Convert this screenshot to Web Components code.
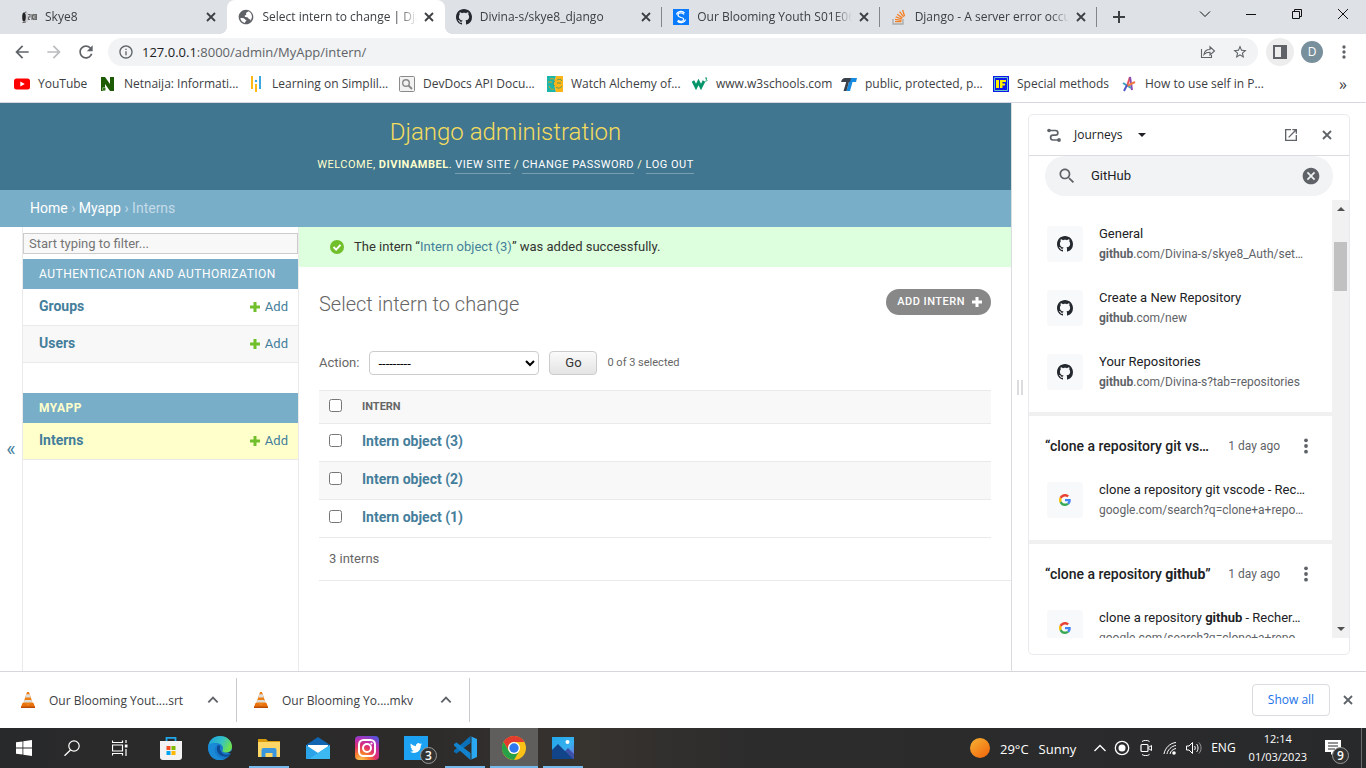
<!DOCTYPE html>
<html lang="en">
<head>
<meta charset="utf-8">
<title>Select intern to change | Django site admin</title>
<style>
  html, body { margin: 0; height: 100%; }
  body { display: flex; flex-direction: column; background: #fff; overflow: hidden;
    font: 12px/16px "Open Sans", "Noto Sans", sans-serif; color: #3c4043; }
  .workspace { flex: 1; min-height: 0; display: flex; }
</style>
</head>
<body>
<tab-strip>
  <browser-tab icon="skye">Skye8</browser-tab>
  <browser-tab icon="globe" active>Select intern to change | Djan</browser-tab>
  <browser-tab icon="github" divider>Divina-s/skye8_django</browser-tab>
  <browser-tab icon="shazam" divider>Our Blooming Youth S01E06</browser-tab>
  <browser-tab icon="stack" divider>Django - A server error occurr</browser-tab>
</tab-strip>
<nav-toolbar></nav-toolbar>
<bookmark-bar>
  <bookmark-link icon="youtube">YouTube</bookmark-link>
  <bookmark-link icon="netnaija">Netnaija: Informati...</bookmark-link>
  <bookmark-link icon="simplilearn">Learning on Simplil...</bookmark-link>
  <bookmark-link icon="devdocs">DevDocs API Docu...</bookmark-link>
  <bookmark-link icon="alchemy">Watch Alchemy of...</bookmark-link>
  <bookmark-link icon="w3">www.w3schools.com</bookmark-link>
  <bookmark-link icon="tee">public, protected, p...</bookmark-link>
  <bookmark-link icon="iff">Special methods</bookmark-link>
  <bookmark-link icon="star-a">How to use self in P...</bookmark-link>
</bookmark-bar>
<div class="workspace">
  <admin-page></admin-page>
  <side-panel>
    <journey-group>
      <journey-item icon="github" name="General"><b>github</b>.com/Divina-s/skye8_Auth/set…</journey-item>
      <journey-item icon="github" name="Create a New Repository"><b>github</b>.com/new</journey-item>
      <journey-item icon="github" name="Your Repositories"><b>github</b>.com/Divina-s?tab=repositories</journey-item>
    </journey-group>
    <journey-group age="1 day ago">
      <span slot="query">“clone a repository git vs…</span>
      <journey-item icon="google"><span slot="name">clone a repository git vscode - Rec…</span>google.com/search?q=clone+a+repo…</journey-item>
    </journey-group>
    <journey-group age="1 day ago">
      <span slot="query">“clone a repository <b>github</b>”</span>
      <journey-item icon="google"><span slot="name">clone a repository <b>github</b> - Recher…</span>google.com/search?q=clone+a+repo…</journey-item>
    </journey-group>
  </side-panel>
</div>
<download-bar>
  <download-item>Our Blooming Yout....srt</download-item>
  <download-item>Our Blooming Yo....mkv</download-item>
</download-bar>
<task-bar></task-bar>

<script>
const ICONS = {
  skye: ['0 0 16 16', '<ellipse cx="3" cy="8" rx="1.8" ry="4.6" fill="#222"/><path d="M5 13L1.500 13.500M3.500 3.500L5.500 3" stroke="#555"/><path d="M6 4v9" stroke="#aaa" stroke-width=".6"/><path d="M7 5.500h2v2.500H7.500v2.500H9M11 5v6M13 5l-1.500 3L13 11M14 5.500h1.500v5H14zM14 8h1.500" fill="none" stroke="#666" stroke-width="1.200"/>'],
  globe: ['0 0 24 24', '<path fill="#5f6368" d="M12 1C5.900 1 1 5.900 1 12s4.900 11 11 11 11-4.900 11-11S18.100 1 12 1zM3.500 13.500c2 .2 5.500-.5 6.500 1.500.8 1.700 3 1 2.500 2.500-.4 1.200-2.500 1-2 3.600C6.500 20 4 17 3.500 13.500zM19 18c.5-2-1-2.500-2.500-3s-1-2-3-2.500-3.500-.5-3.500-2 2-1 2.500-2-1.500-2 0-3 3-1.200 3-2c3 1 5.500 4.500 5.500 8.500z"/>'],
  github: ['0 0 16 16', '<path fill="#24292f" d="M8 0C3.580 0 0 3.580 0 8c0 3.540 2.290 6.530 5.470 7.590.4.070.550-.170.550-.380 0-.190-.010-.820-.010-1.490-2.010.370-2.530-.490-2.690-.940-.090-.230-.480-.940-.820-1.130-.280-.150-.680-.520-.010-.530.630-.010 1.080.580 1.230.820.720 1.210 1.870.870 2.330.660.070-.520.280-.870.510-1.070-1.780-.2-3.640-.890-3.640-3.950 0-.870.310-1.590.820-2.150-.080-.2-.360-1.020.080-2.120 0 0 .670-.210 2.200.820.640-.180 1.320-.270 2-.270s1.360.090 2 .270c1.530-1.040 2.200-.820 2.200-.820.440 1.100.160 1.920.080 2.120.510.560.820 1.270.820 2.150 0 3.070-1.870 3.750-3.650 3.950.290.250.540.730.540 1.480 0 1.070-.010 1.930-.010 2.200 0 .210.150.460.550.380A8.010 8.010 0 0 0 16 8c0-4.420-3.580-8-8-8z"/>'],
  shazam: ['0 0 16 16', '<path fill="#0a7bff" d="M0 0h16v16H0z"/><path d="M11 5.500C9.500 3 5.500 3.500 5 5.500s1 2.500 3 3 3 1 2.500 2.500-4 2-5.500 0M11.500 4C9 1 4 2.500 3.500 5.500M4.500 12c2.500 3 7.500 1.500 8-1.500" fill="none" stroke="#fff" stroke-width="1.200"/>'],
  stack: ['0 0 16 16', '<path d="M2 10v5h10v-5" fill="none" stroke="#aaa" stroke-width="1.300"/><path d="M4 12.700h6.500M4 10.400l6.500 1M4.700 7.800l6.200 2.200M6.200 5.200l5.300 3.800M8.600 2.700l4 5.200M11.600 1l2 6.200" stroke="#f48024" stroke-width="1.300"/>'],
  google: ['0 0 48 48', '<path fill="#EA4335" d="M24 9.500c3.540 0 6.710 1.220 9.210 3.600l6.850-6.850C35.900 2.380 30.470 0 24 0 14.620 0 6.510 5.380 2.560 13.220l7.980 6.190C12.430 13.720 17.740 9.500 24 9.500z"/><path fill="#4285F4" d="M46.980 24.550c0-1.570-.15-3.090-.38-4.550H24v9.020h12.940c-.58 2.960-2.260 5.480-4.780 7.180l7.730 6c4.510-4.180 7.090-10.360 7.090-17.650z"/><path fill="#FBBC05" d="M10.530 28.590c-.48-1.450-.76-2.990-.76-4.590s.27-3.140.76-4.590l-7.980-6.190C.92 16.460 0 20.120 0 24c0 3.880.92 7.540 2.560 10.780l7.970-6.190z"/><path fill="#34A853" d="M24 48c6.480 0 11.930-2.130 15.890-5.810l-7.730-6c-2.150 1.450-4.920 2.300-8.160 2.300-6.260 0-11.570-4.220-13.470-9.910l-7.980 6.190C6.510 42.620 14.620 48 24 48z"/>'],
  close: ['0 0 16 16', '<path d="M4 4l8 8M12 4l-8 8" stroke="currentColor" stroke-width="1.800"/>'],
  plus: ['0 0 16 16', '<path d="M8 2v12M2 8h12" stroke="currentColor" stroke-width="2"/>'],
  caretdown: ['0 0 12 12', '<path d="M1 3.500l5 5 5-5" fill="none" stroke="currentColor"/>'],
  minimize: ['0 0 12 12', '<path d="M1 6.500h10" stroke="currentColor"/>'],
  restore: ['0 0 12 12', '<path d="M1.500 3.500h7v7h-7zM3.500 3.500v-2h7v7h-2" fill="none" stroke="currentColor"/>'],
  winclose: ['0 0 12 12', '<path d="M1 1l10 10M11 1L1 11" stroke="currentColor"/>'],
  back: ['0 0 24 24', '<path fill="currentColor" d="M20 11H7.830l5.590-5.590L12 4l-8 8 8 8 1.410-1.410L7.830 13H20v-2z"/>'],
  forward: ['0 0 24 24', '<path fill="currentColor" d="M12 4l-1.410 1.410L16.170 11H4v2h12.170l-5.580 5.590L12 20l8-8z"/>'],
  reload: ['0 0 24 24', '<path fill="currentColor" d="M17.650 6.350C16.200 4.900 14.210 4 12 4c-4.420 0-7.990 3.580-7.990 8s3.570 8 7.990 8c3.730 0 6.840-2.550 7.730-6h-2.080c-.82 2.330-3.040 4-5.650 4-3.310 0-6-2.690-6-6s2.690-6 6-6c1.660 0 3.140.69 4.220 1.780L13 11h7V4l-2.350 2.350z"/>'],
  info: ['0 0 24 24', '<path fill="currentColor" d="M11 7h2v2h-2zm0 4h2v6h-2zm1-9C6.480 2 2 6.480 2 12s4.480 10 10 10 10-4.480 10-10S17.520 2 12 2zm0 18c-4.410 0-8-3.590-8-8s3.590-8 8-8 8 3.590 8 8-3.590 8-8 8z"/>'],
  share: ['0 0 16 16', '<path d="M1.500 5v8.500h10V11M4 10.500c.5-3.500 2.500-5 6-5V2.800L14.500 7 10 11V8.300c-3 0-4.500.5-6 2.200z" fill="none" stroke="currentColor" stroke-width="1.100"/>'],
  star: ['0 0 24 24', '<path fill="currentColor" d="M22 9.240l-7.190-.62L12 2 9.190 8.630 2 9.240l5.460 4.730L5.820 21 12 17.270 18.180 21l-1.630-7.030L22 9.240zM12 15.400l-3.760 2.270 1-4.280-3.320-2.880 4.380-.38L12 6.100l1.710 4.040 4.380.38-3.320 2.880 1 4.280L12 15.400z"/>'],
  panel: ['0 0 16 16', '<path d="M2 2h12v12H2z" fill="none" stroke="currentColor" stroke-width="2"/><path d="M9 2h5v12H9z" fill="currentColor"/>'],
  dots: ['0 0 16 16', '<g fill="currentColor"><circle cx="8" cy="2.300" r="1.900"/><circle cx="8" cy="8" r="1.900"/><circle cx="8" cy="13.700" r="1.900"/></g>'],
  youtube: ['0 0 16 16', '<rect y="2.500" width="16" height="11" rx="2.500" fill="#f00"/><path d="M6.300 5.500v5L10.800 8z" fill="#fff"/>'],
  netnaija: ['0 0 16 16', '<path fill="#1d5c05" d="M1 1h4l5 7V1h4v14h-4L5 8v7H1z"/><circle cx="4" cy="13" r="2" fill="#8ab47c"/><circle cx="4" cy="13" r="1" fill="#1d5c05"/>'],
  simplilearn: ['0 0 16 16', '<path d="M4 0v13" stroke="#fdb913" stroke-width="2"/><path d="M12 0v13" stroke="#3aa8e0" stroke-width="2"/><path d="M8 8v8" stroke="#fdb913" stroke-width="2"/><circle cx="8" cy="5" r="1.200" fill="#3aa8e0"/>'],
  devdocs: ['0 0 16 16', '<rect x=".5" y=".5" width="15" height="15" rx="1" fill="#f2f2f2" stroke="#8a8a8a"/><circle cx="7" cy="7" r="3.300" fill="none" stroke="#888" stroke-width="1.400"/><path d="M9.500 9.500l3.500 3.500" stroke="#888" stroke-width="1.800"/>'],
  alchemy: ['0 0 16 16', '<path fill="#1cb5a9" d="M0 0h9L7 8l2 8H0z"/><path fill="#fdb515" d="M9 0h7v16H9L7 8z"/><path d="M1 6h4M3 3c3-1 5 0 5 2M2 10c1 3 3 4 5 3" fill="none" stroke="#d9a51c"/><path d="M10 4c2-1 4-1 5 1M10 7h4M9 11c2 2 5 1 6-1M7.500 5L6 8.500 8 10" fill="none" stroke="#4f9a64"/>'],
  w3: ['0 0 16 16', '<path d="M1 5l3 6 2.500-5 2.500 5 3-6" fill="none" stroke="#04966a" stroke-width="2.800"/><path d="M13 2h2l-1 1.500c1.500 0 1.500 2-.8 1.700" fill="none" stroke="#04966a" stroke-width=".9"/>'],
  tee: ['0 0 16 16', '<path d="M6 2h10l-1 4h-3.500L9 15H5.500L8 6z" fill="#1689e0"/><path d="M0 6c1-3 2-4 4-4h6L9 6zM8.500 4L5.500 15H2.500L5.500 5z" fill="#39424c"/>'],
  iff: ['0 0 16 16', '<path fill="#1017e8" d="M0 0h16v16H0z"/><path fill="none" stroke="#62c6c6" d="M1.500 1.500h13v13h-13z"/><path fill="#fff200" d="M3 4h3v8H3zM7 4h6v2H9.500v1.500H12v2H9.500V12H7z"/>'],
  'star-a': ['0 0 16 16', '<g fill="none" stroke-width="2"><path d="M9 1L6 10" stroke="#e9515b"/><path d="M9 1l2 13" stroke="#8a4bb3"/><path d="M2 7l8 5" stroke="#37a0bd"/><path d="M14 6l-8 4" stroke="#f07a45"/><path d="M6 9l-3 6" stroke="#4c58c8"/></g>'],
  journeys: ['0 0 16 16', '<circle cx="3" cy="3.500" r="1.800" fill="currentColor"/><circle cx="13" cy="13" r="1.900" fill="currentColor"/><path d="M4 3.500h5.500a2.200 2.200 0 0 1 0 4.700H7A2.300 2.300 0 0 0 7 13h5" fill="none" stroke="currentColor" stroke-width="1.700"/>'],
  opennew: ['0 0 24 24', '<path fill="currentColor" d="M19 19H5V5h7V3H3v18h18v-9h-2v7zM14 3v2h3.590l-9.830 9.830 1.410 1.410L19 6.410V10h2V3h-7z"/>'],
  search: ['0 0 24 24', '<path fill="currentColor" d="M15.500 14h-.79l-.28-.27C15.410 12.590 16 11.110 16 9.500 16 5.910 13.090 3 9.500 3S3 5.910 3 9.500 5.910 16 9.500 16c1.610 0 3.090-.59 4.230-1.570l.27.28v.79l5 4.990L20.490 19l-4.990-5zm-6 0C7.010 14 5 11.990 5 9.500S7.010 5 9.500 5 14 7.010 14 9.500 11.990 14 9.500 14z"/>'],
  cancel: ['0 0 24 24', '<path fill="currentColor" d="M12 2C6.470 2 2 6.470 2 12s4.470 10 10 10 10-4.470 10-10S17.530 2 12 2zm5 13.590L15.590 17 12 13.410 8.410 17 7 15.590 10.590 12 7 8.410 8.410 7 12 10.590 15.590 7 17 8.410 13.410 12 17 15.590z"/>'],
  tick: ['0 0 16 16', '<circle cx="8" cy="8" r="8" fill="#70bf2b"/><path d="M4 8l3 3 5-5.500" fill="none" stroke="#fff" stroke-width="2.200"/>'],
  add: ['0 0 12 12', '<path d="M6 1v10M1 6h10" stroke="currentColor" stroke-width="3"/>'],
  up: ['0 0 12 12', '<path d="M2 8l4-4 4 4" fill="none" stroke="currentColor" stroke-width="1.600"/>'],
  cone: ['0 0 16 16', '<path d="M7 0h2l4 12H3z" fill="#ee7f12"/><path d="M6.300 2.200h3.400l1 3.300H5.300zM4.500 8h7l.8 2.500H3.700z" fill="#dcdcda"/><path d="M2.500 11h1.200c2 1.500 6.600 1.500 8.600 0h1.200L15 15H1z" fill="#e9720c"/><path d="M1 14.500h14V16H1z" fill="#b84a06"/>'],
  windows: ['0 0 16 16', '<path fill="#fff" d="M0 2.300L6.500 1.400v6.200H0zM7.300 1.300L16 0v7.600H7.300zM0 8.400h6.500v6.200L0 13.700zM7.300 8.400H16V16l-8.700-1.300z"/>'],
  find: ['0 0 16 16', '<circle cx="10" cy="6" r="5.200" fill="none" stroke="#fff" stroke-width="1.200"/><path d="M6.500 10L.5 15.800" stroke="#fff" stroke-width="1.300"/>'],
  taskview: ['0 0 16 16', '<path d="M.5.5v2h10v-2M.5 15.500v-2h10v2M.5 5h10v6H.500zM14 0v3M14 9v7" fill="none" stroke="#fff" stroke-width="1.200"/><path d="M12.800 4.500h2.700v3h-2.700z" fill="#fff"/>'],
  store: ['0 0 24 24', '<path d="M7.500 5V1.800h9V5" fill="none" stroke="#22a7e8" stroke-width="1.800"/><path d="M1 5h22v16a3 3 0 0 1-3 3H4a3 3 0 0 1-3-3z" fill="#f3f3f3"/><path fill="#f25022" d="M7.500 10h4v4h-4z"/><path fill="#7fba00" d="M12.500 10h4v4h-4z"/><path fill="#00a4ef" d="M7.500 15h4v4h-4z"/><path fill="#ffb900" d="M12.500 15h4v4h-4z"/>'],
  edge: ['0 0 24 24', '<defs><linearGradient id="e" x1="0" x2="1" y2=".4"><stop stop-color="#1aa0df"/><stop offset=".6" stop-color="#35c1c5"/><stop offset="1" stop-color="#6be051"/></linearGradient></defs><circle cx="12" cy="12" r="12" fill="#1679cb"/><path d="M.2 10.500C1.300 4 6 0 12 0c7 0 12 5 12 10.500 0 4-3 6-6 6s-4.500-1.500-3.500-2.500 1-5-3.500-6.500S1.500 7.500.2 10.500z" fill="url(#e)"/><path d="M10 8.500C6.500 10 5.500 14 7.500 17.500S14 24 17.500 22.500c-3 2-8 2-12 0S-1 12 .5 9.500 6.500 6.500 10 8.500z" fill="#1a8ad6"/><path d="M10 9c-2 3-1.500 8 3 10.500s8.500.5 9.500-1.500c-3 1.200-7 1-8.500-1S11 12 12.500 10.500z" fill="#0c4a94"/><path d="M22.500 18c1.500-1-4-1-5.500-1.500s-3-1.800-2.500-2.700c.5 3.500 5 4 9.500 1v3z" fill="#2b2b2d"/>'],
  explorer: ['0 0 24 24', '<path d="M1 3h8l2 2h12v3H1z" fill="#d99b0b"/><path d="M1 6h22v15H1z" fill="#ffd766"/><path d="M4.500 21v-7a2 2 0 0 1 2-2h11a2 2 0 0 1 2 2v7h-4v-4h-7v4z" fill="#3b97dd"/>'],
  mail: ['0 0 24 24', '<path d="M0 9l12-8 12 8v14H0z" fill="#1064b0"/><path d="M2 9h20v8H2z" fill="#fff"/><path d="M0 9l12 8 12-8v14H0z" fill="#2aa3e8"/><path d="M12 17L24 9v14H3z" fill="#3cb9f3"/>'],
  instagram: ['0 0 24 24', '<defs><radialGradient id="i" cx=".25" cy="1.050" r="1.150"><stop stop-color="#fdd35a"/><stop offset=".3" stop-color="#f77b2e"/><stop offset=".55" stop-color="#e1306c"/><stop offset=".8" stop-color="#b82fb4"/><stop offset="1" stop-color="#5b51d8"/></radialGradient></defs><rect width="24" height="24" rx="4" fill="url(#i)"/><rect x="4" y="4" width="16" height="16" rx="4.500" fill="none" stroke="#fff" stroke-width="2"/><circle cx="12" cy="12" r="4" fill="none" stroke="#fff" stroke-width="2"/><circle cx="16.500" cy="7.500" r="1.100" fill="#fff"/>'],
  twitter: ['0 0 24 24', '<path fill="#1da1f2" d="M0 0h24v24H0z"/><path transform="translate(6 6) scale(.5)" fill="#fff" d="M23.950 4.570a10 10 0 0 1-2.820.77 4.960 4.960 0 0 0 2.160-2.720c-.95.550-2 .960-3.130 1.180a4.920 4.920 0 0 0-8.380 4.480C7.690 8.100 4.070 6.130 1.640 3.160a4.820 4.820 0 0 0-.67 2.480c0 1.710.87 3.210 2.190 4.100a4.900 4.900 0 0 1-2.230-.62v.060a4.920 4.920 0 0 0 3.950 4.830 5 5 0 0 1-2.210.08 4.940 4.940 0 0 0 4.600 3.420A9.870 9.870 0 0 1 0 19.540a13.990 13.990 0 0 0 7.550 2.210c9.050 0 14-7.500 14-13.980 0-.21 0-.42-.02-.63a9.930 9.930 0 0 0 2.420-2.570z"/>'],
  vscode: ['0 0 24 24', '<path d="M17.500 0v7L3.500 17.500 1 16v-1.500z" fill="#0a70b8"/><path d="M17.500 24v-7L3.500 6.500 1 8v1.500z" fill="#1284cf"/><path d="M17 0l7 3v18l-7 3c1 0 1.500-.5 1.500-1.500v-21C18.500.5 18 0 17 0z" fill="#2aa8f2"/>'],
  chrome: ['0 0 24 24', '<circle cx="12" cy="12" r="12" fill="#fbc116"/><path d="M1.600 6A12 12 0 0 1 22.400 6H12a6 6 0 0 0-5.200 9z" fill="#e33b2e"/><path d="M1.600 6A12 12 0 0 0 12 24l5.200-9A6 6 0 0 1 6.800 15z" fill="#28a047"/><circle cx="12" cy="12" r="6" fill="#fff"/><circle cx="12" cy="12" r="4.700" fill="#2f77ee"/>'],
  photos: ['0 0 24 24', '<defs><linearGradient id="p" x2="1" y2="1"><stop stop-color="#22a7ea"/><stop offset=".6" stop-color="#38b0f0"/><stop offset="1" stop-color="#7a5cd0"/></linearGradient></defs><path fill="url(#p)" d="M1 1h22v22H1z"/><path d="M23 23H13l-1-6 5-5 6 6z" fill="#3c50a8"/><path d="M1 14l6-6 15 15H1z" fill="#12448a"/><circle cx="16.500" cy="6" r="2" fill="#fff"/>'],
  sun: ['0 0 20 20', '<defs><linearGradient id="s" x2=".8" y2="1"><stop stop-color="#f5b335"/><stop offset="1" stop-color="#f26a0d"/></linearGradient></defs><circle cx="10" cy="10" r="10" fill="url(#s)"/>'],
  trayup: ['0 0 12 12', '<path d="M.5 9L6 3.500 11.500 9" fill="none" stroke="currentColor" stroke-width="1.300"/>'],
  record: ['0 0 16 16', '<circle cx="8" cy="8" r="6.700" fill="none" stroke="currentColor" stroke-width="1.300"/><circle cx="8" cy="8" r="3.500" fill="currentColor"/>'],
  meet: ['0 0 16 16', '<rect x="3" y="4.500" width="7" height="7" rx="1" fill="none" stroke="currentColor" stroke-width="1.200"/><path d="M10.500 7.500l3-2v5l-3-2M4 1.500c2-1.500 5.500-1.500 7.500 0M4 14.500c2 1.500 5.500 1.500 7.500 0" fill="none" stroke="currentColor"/>'],
  wifi: ['0 0 16 16', '<g fill="none" stroke="currentColor"><path d="M2 14C3 8 8 3 14 2.500"/><path d="M5 14c.5-4 4.500-8 9-8.500"/><path d="M8 14c.5-3 3-5 6-5.500"/></g><circle cx="12" cy="13" r="1.800" fill="currentColor"/>'],
  volume: ['0 0 16 16', '<path d="M.5 6H3l3.500-3.500v11L3 10H.500z" fill="none" stroke="currentColor"/><path d="M8.500 6c1 1.200 1 2.800 0 4M10.500 4c2 2 2 6 0 8" fill="none" stroke="currentColor"/><path d="M12.800 2.500c3 3 3 8 0 11" fill="none" stroke="#999"/>'],
  notes: ['0 0 16 16', '<path fill="#fff" d="M0 0h16v12H9l-3 3v-3H0z"/><path d="M3 3h10M3 6h10M3 9h7" stroke="#2b2b2d"/>'],
  scrollup: ['0 0 8 8', '<path d="M0 6l4-4 4 4z" fill="#505050"/>'],
  scrolldown: ['0 0 8 8', '<path d="M0 2l4 4 4-4z" fill="#505050"/>'],
  dropdown: ['0 0 10 10', '<path d="M1 3l4 4 4-4z" fill="currentColor"/>']
};

/* Gives every element its open shadow root, filled from css() and html(). */
class ShadowElement extends HTMLElement {
  connectedCallback() {
    if (this.shadowRoot) return;
    const t = document.createElement('template');
    t.innerHTML = `<style>
      * { box-sizing: border-box; }
      button { font: inherit; color: inherit; background: none; border: 0; padding: 0; margin: 0;
        display: grid; place-items: center; }
      a { color: inherit; text-decoration: none; }
      ${this.css()}</style>${this.html()}`;
    this.attachShadow({ mode: 'open' }).append(t.content.cloneNode(true));
  }
  css() { return ''; }
  html() { return '<slot></slot>'; }
}

customElements.define('ui-icon', class extends ShadowElement {
  css() {
    const s = this.getAttribute('size') || 16;
    return `:host { display: inline-block; flex: none; width: ${s}px; height: ${s}px; } svg { display: block; width: 100%; height: 100%; }`;
  }
  html() {
    const [box, body] = ICONS[this.getAttribute('name')];
    return `<svg viewBox="${box}" aria-hidden="true">${body}</svg>`;
  }
});

customElements.define('tab-strip', class extends ShadowElement {
  css() { return `
    :host { display: flex; height: 34px; background: #dee1e6; padding-left: 10px; }
    .tabs { flex: 1; max-width: 1087px; display: flex; }
    .new { width: 28px; height: 34px; margin-left: 8px; }
    .window { margin-left: auto; display: flex; color: #111; }
    .window button { width: 46px; height: 28px; }`; }
  html() { return `<div class="tabs"><slot></slot></div>
    <button class="new" aria-label="New tab"><ui-icon name="plus"></ui-icon></button>
    <div class="window">${['caretdown', 'minimize', 'restore', 'winclose'].map(n =>
      `<button aria-label="${n}"><ui-icon name="${n}" size="12"></ui-icon></button>`).join('')}</div>`; }
});

customElements.define('browser-tab', class extends ShadowElement {
  css() { return `
    :host { flex: 1 1 0; min-width: 0; display: flex; align-items: center; padding: 0 8px 0 11px;
      position: relative; color: #3c4043; }
    :host([active]) { background: #fff; border-radius: 8px 8px 0 0; }
    :host([active])::before, :host([active])::after { content: ""; position: absolute; bottom: 0; width: 8px; height: 8px; }
    :host([active])::before { left: -8px; background: radial-gradient(circle at 0 0, transparent 8px, #fff 8px); }
    :host([active])::after { right: -8px; background: radial-gradient(circle at 100% 0, transparent 8px, #fff 8px); }
    :host([divider])::after { content: ""; position: absolute; right: 0; top: 7px; width: 1px; height: 20px; background: #80868b; }
    .title { flex: 1; min-width: 0; margin: 0 4px 0 8px; white-space: nowrap; overflow: hidden;
      -webkit-mask: linear-gradient(90deg, #000 calc(100% - 18px), transparent); }
    button { width: 16px; height: 16px; color: #3c4043; }`; }
  html() { return `<ui-icon name="${this.getAttribute('icon')}"></ui-icon>
    <span class="title"><slot></slot></span><button aria-label="Close tab"><ui-icon name="close"></ui-icon></button>`; }
});

customElements.define('nav-toolbar', class extends ShadowElement {
  css() { return `
    :host { display: flex; align-items: center; height: 36px; padding: 0 15px 0 12px; color: #5f6368; }
    .nav { width: 20px; height: 28px; margin-right: 12px; }
    .nav[disabled] { color: #babcbe; }
    .omnibox { flex: 1; display: flex; align-items: center; gap: 8px; height: 28px; border-radius: 14px;
      background: #f1f3f4; padding: 0 10px; }
    .url { flex: 1; font-size: 13px; line-height: 20px; }
    .url b { font-weight: 400; color: #202124; }
    .tools { display: flex; gap: 16px; }
    .panel { width: 28px; height: 28px; border-radius: 50%; background: #ededed; margin: 0 7px 0 8px; }
    .avatar { width: 22px; height: 22px; border-radius: 50%; background: #78909c; color: #fff; margin-right: 14px; }`; }
  html() { return `
    <button class="nav" aria-label="Back"><ui-icon name="back" size="20"></ui-icon></button>
    <button class="nav" aria-label="Forward" disabled><ui-icon name="forward" size="20"></ui-icon></button>
    <button class="nav" aria-label="Reload"><ui-icon name="reload" size="20"></ui-icon></button>
    <div class="omnibox"><ui-icon name="info"></ui-icon>
      <span class="url"><b>127.0.0.1</b>:8000/admin/MyApp/intern/</span>
      <span class="tools"><button aria-label="Share"><ui-icon name="share"></ui-icon></button>
      <button aria-label="Bookmark"><ui-icon name="star"></ui-icon></button></span></div>
    <button class="panel" aria-label="Side panel"><ui-icon name="panel"></ui-icon></button>
    <button class="avatar" aria-label="Profile">D</button>
    <button aria-label="Menu"><ui-icon name="dots" size="14"></ui-icon></button>`; }
});

customElements.define('bookmark-bar', class extends ShadowElement {
  css() { return `
    :host { display: flex; align-items: center; justify-content: space-between; height: 33px; padding: 0 19px 4px 14px;
      box-sizing: border-box; border-bottom: 1px solid #d9d5e2; }
    nav { display: grid; grid-template-columns: 86px 148px 151px 148px 145px 149px 152px 128px auto; }
    button { font-size: 16px; }`; }
  html() { return `<nav aria-label="Bookmarks"><slot></slot></nav><button aria-label="More bookmarks">»</button>`; }
});

customElements.define('bookmark-link', class extends ShadowElement {
  css() { return `:host { display: block; white-space: nowrap; } a { display: flex; align-items: center; gap: 8px; }`; }
  html() { return `<a href="#"><ui-icon name="${this.getAttribute('icon')}"></ui-icon><span><slot></slot></span></a>`; }
});

customElements.define('admin-page', class extends ShadowElement {
  css() { return `
    :host { flex: 1; min-width: 0; display: flex; flex-direction: column; font: 13px/18px Roboto, sans-serif; color: #333;
      overflow: hidden; border-right: 1px solid #dadce0; }
    header { height: 87px; background: #417690; color: #ffc; text-align: center; padding: 15px 40px 0; }
    h1 { margin: 0 0 11px; font-size: 24px; line-height: 28px; font-weight: 300; color: #f5dd5d; }
    .tools { font-size: 11px; line-height: 14px; text-transform: uppercase; letter-spacing: .5px; }
    .tools a { display: inline-block; line-height: 16px; border-bottom: 1px solid #7a9fb1; color: #fff; }
    .crumbs { height: 37px; background: #79aec8; color: #c4dce8; padding: 10px 30px 0; font-size: 14px; line-height: 17px; }
    .crumbs a { color: #fff; }
    .body { flex: 1; display: flex; min-height: 0; }
    .toggle { width: 23px; border-right: 1px solid #eaeaea; color: #447e9b; font-size: 20px; }
    nav { width: 276px; padding-top: 6px; border-right: 1px solid #eaeaea; }
    .filter { display: block; width: 100%; height: 21px; padding: 0 5px; border: 1px solid #ccc; background: #f8f8f8;
      font: inherit; margin-bottom: 5px; border-radius: 0; }
    .filter::placeholder { color: #757575; }
    h2 { margin: 0; height: 30px; padding: 0 16px; background: #79aec8; color: #fff; font-size: 12px; line-height: 30px;
      font-weight: 400; letter-spacing: .5px; text-transform: uppercase; }
    h2.on { color: #ffc; font-weight: 700; }
    .row { display: flex; justify-content: space-between; height: 37px; padding: 0 10px 0 16px;
      border-bottom: 1px solid #eaeaea; color: #447e9b; line-height: 36px; }
    .row.alt { background: #f8f8f8; } .row.on { background: #ffc; }
    .row b { font-size: 14px; font-weight: 700; line-height: 34px; }
    .row .add { display: flex; align-items: center; gap: 4px; }
    .row ui-icon { color: #70bf2b; }
    .gap { height: 30px; }
    main { flex: 1; min-width: 0; }
    .msg { height: 40px; background: #dfd; padding: 0 31px; display: flex; align-items: center; gap: 10px; }
    .msg a { color: #447e9b; }
    .content { padding: 20px 0 0 20px; }
    .head { display: flex; justify-content: space-between; height: 34px; margin: 0 20px 0 0; }
    .head h1 { margin: 0; color: #666; font-size: 20px; line-height: 34px; }
    .new { margin-top: 2px; height: 26px; display: flex; align-items: center; gap: 6px; padding: 0 8px 0 11px; border-radius: 13px;
      background: #888; color: #fff; font-size: 11px; font-weight: 500; letter-spacing: .5px; text-transform: uppercase; }
    form { display: flex; align-items: center; gap: 10px; margin-top: 30px; height: 24px; color: #666; }
    select { width: 170px; height: 24px; border: 1px solid #ccc; border-radius: 4px; background: #fff; color: #000;
      font: inherit; padding: 0 4px; }
    .go { width: 48px; height: 24px; border: 1px solid #ccc; border-radius: 4px; color: #333;
      background: linear-gradient(#fafafa, #e4e4e4); }
    small { font-size: 11px; }
    table { border-collapse: collapse; width: calc(100% - 20px); margin-top: 15px; }
    th, td { height: 38px; padding: 0 10px; text-align: left; border-bottom: 1px solid #eaeaea; }
    td { padding-bottom: 2px; }
    thead th { height: 33px; border-top: 1px solid #eaeaea; background: #f8f8f8; font-size: 11px; line-height: 16px;
      font-weight: 700; color: #666; text-transform: uppercase; }
    th:first-child, td:first-child { width: 33px; }
    td a { font-size: 14px; font-weight: 700; color: #447e9b; }
    tbody tr:nth-child(2) { background: #f8f8f8; }
    input[type=checkbox] { display: block; width: 13px; height: 13px; margin: 0 0 3px; }
    .count { margin: 0; height: 43px; padding: 0 10px; line-height: 42px; color: #666; border-bottom: 1px solid #eaeaea; }`; }
  html() {
    const row = (name, cls) => `<div class="row ${cls}"><b><a href="#">${name}</a></b>
      <a href="#" class="add"><ui-icon name="add" size="12"></ui-icon>Add</a></div>`;
    return `
    <header><h1><a href="#">Django administration</a></h1>
      <div class="tools">Welcome, <b>Divinambel</b>. <a href="#">View site</a> / <a href="#">Change password</a> / <a href="#">Log out</a></div></header>
    <div class="crumbs"><a href="#">Home</a> › <a href="#">Myapp</a> › Interns</div>
    <div class="body">
      <button class="toggle" aria-label="Toggle navigation">«</button>
      <nav><input class="filter" type="search" placeholder="Start typing to filter..." aria-label="Filter navigation items">
        <h2>Authentication and Authorization</h2>${row('Groups', '')}${row('Users', 'alt')}
        <div class="gap"></div><h2 class="on">Myapp</h2>${row('Interns', 'on')}</nav>
      <main><div class="msg"><ui-icon name="tick" size="14"></ui-icon><span>The intern “<a href="#">Intern object (3)</a>” was added successfully.</span></div>
        <div class="content">
          <div class="head"><h1>Select intern to change</h1><a class="new" href="#">Add intern <ui-icon name="add" size="12"></ui-icon></a></div>
          <form><label for="action">Action:</label><select id="action"><option>---------</option></select>
            <button class="go" type="button">Go</button><small>0 of 3 selected</small></form>
          <table><thead><tr><th><input type="checkbox" aria-label="Select all"></th><th>Intern</th></tr></thead>
          <tbody>${[3, 2, 1].map(n => `<tr><td><input type="checkbox" aria-label="Select intern ${n}"></td>
            <td><a href="#">Intern object (${n})</a></td></tr>`).join('')}</tbody></table>
          <p class="count">3 interns</p>
        </div></main>
    </div>`; }
});

customElements.define('side-panel', class extends ShadowElement {
  css() { return `
    :host { flex: none; display: flex; width: 354px; font: 13px/20px Roboto, sans-serif; color: #202124; }
    .grip { width: 16px; display: flex; align-items: center; justify-content: center; gap: 2px; }
    .grip i { width: 2px; height: 15px; background: #dadce0; }
    .card { flex: 1; min-width: 0; display: flex; flex-direction: column; margin: 11px 16px 16px 0; border: 1px solid #e8eaed;
      border-radius: 5px; padding-bottom: 16px; }
    header { display: flex; align-items: center; height: 41px; border-bottom: 1px solid #dadce0; padding: 0 14px 0 17px; color: #5f6368; }
    .pick { display: flex; align-items: center; gap: 14px; margin-left: 12px; margin-right: auto; color: #202124;
      font: 12px/16px "Open Sans", sans-serif; }
    header button + button { margin-left: 20px; }
    .search { flex: none; display: flex; align-items: center; height: 40px; margin: 0 16px 4px; padding: 0 12px; border-radius: 20px;
      background: #f1f3f4; color: #5f6368; gap: 14px; }
    .search input { flex: 1; min-width: 0; border: 0; background: none; font: inherit; color: #202124; padding: 0; }
    .view { flex: 1; min-height: 0; display: flex; }
    .list { flex: 1; min-width: 0; overflow: hidden; padding-top: 4px; }
    .bar { width: 17px; background: #f1f1f1; display: flex; flex-direction: column; align-items: center; padding: 5px 0; }
    .thumb { width: 13px; height: 49px; margin: 29px 0 auto; background: #c1c1c1; }`; }
  html() { return `<div class="grip"><i></i><i></i></div>
    <section class="card">
      <header><ui-icon name="journeys"></ui-icon>
        <button class="pick">Journeys <ui-icon name="dropdown" size="10"></ui-icon></button>
        <button aria-label="Open in tab"><ui-icon name="opennew"></ui-icon></button>
        <button aria-label="Close"><ui-icon name="close"></ui-icon></button></header>
      <label class="search"><ui-icon name="search" size="20"></ui-icon><input type="text" value="GitHub" aria-label="Search journeys"><ui-icon name="cancel" size="20"></ui-icon></label>
      <div class="view"><div class="list"><slot></slot></div>
        <div class="bar"><ui-icon name="scrollup" size="8"></ui-icon><div class="thumb"></div><ui-icon name="scrolldown" size="8"></ui-icon></div></div>
    </section>`; }
});

customElements.define('journey-group', class extends ShadowElement {
  css() { return `
    :host { display: block; padding: 8px 0; border-bottom: 4px solid #f0f0f0; }
    h3 { margin: 0; display: flex; align-items: center; height: 44px; padding: 0 18px 0 16px; font-size: 14px; font-weight: 500; }
    .q { flex: 1; min-width: 0; white-space: nowrap; overflow: hidden; text-overflow: ellipsis; }
    time { font-size: 12px; font-weight: 400; color: #5f6368; margin: 0 18px 0 16px; }
    button { color: #5f6368; }`; }
  html() {
    const age = this.getAttribute('age');
    return (age ? `<h3><span class="q"><slot name="query"></slot></span><time>${age}</time>
      <button aria-label="Actions"><ui-icon name="dots"></ui-icon></button></h3>` : '') + '<slot></slot>';
  }
});

customElements.define('journey-item', class extends ShadowElement {
  css() { return `
    :host { display: block; }
    a { display: flex; align-items: center; gap: 16px; height: 64px; padding: 0 22px 0 18px; }
    .tile { flex: none; width: 36px; height: 36px; display: grid; place-items: center; border-radius: 4px; background: #f8f9fa; }
    .text { flex: 1; min-width: 0; }
    .text div { white-space: nowrap; overflow: hidden; text-overflow: ellipsis; line-height: 20px; }
    .url { font-size: 12px; color: #5f6368; }`; }
  html() {
    const icon = this.getAttribute('icon');
    return `<a href="#"><span class="tile"><ui-icon name="${icon}" size="${icon === 'google' ? 12 : 16}"></ui-icon></span>
      <span class="text"><div><slot name="name">${this.getAttribute('name') || ''}</slot></div><div class="url"><slot></slot></div></span></a>`;
  }
});

customElements.define('download-bar', class extends ShadowElement {
  css() { return `
    :host { display: flex; align-items: center; height: 57px; box-sizing: border-box; border-top: 1px solid #d5d7da; padding-right: 10px; }
    .all { margin-left: auto; width: 78px; height: 32px; border: 1px solid #dadce0; border-radius: 4px; color: #1a73e8; font-weight: 500; }
    .x { margin-left: 10px; color: #5f6368; }`; }
  html() { return `<slot></slot><button class="all">Show all</button><button class="x" aria-label="Close"><ui-icon name="close"></ui-icon></button>`; }
});

customElements.define('download-item', class extends ShadowElement {
  css() { return `
    :host { display: flex; align-items: center; width: 233px; height: 44px; box-sizing: border-box; padding: 0 16px;
      border-right: 1px solid #c8cacd; white-space: nowrap; }
    :host(:first-child) { width: 237px; padding-left: 20px; }
    span { flex: 1; margin-left: 13px; padding-top: 2px; }
    button { color: #5f6368; }`; }
  html() { return `<ui-icon name="cone"></ui-icon><span><slot></slot></span><button aria-label="Options"><ui-icon name="up" size="14"></ui-icon></button>`; }
});

customElements.define('task-bar', class extends ShadowElement {
  css() { return `
    :host { display: flex; align-items: center; height: 40px; color: #fff;
      background: linear-gradient(90deg, #28292a, #2c2b2a 30%, #37332f 43%, #2c2c2c 55%, #28292b); }
    .sys { width: 48px; height: 40px; }
    .apps { display: flex; gap: 1px; margin-left: 3px; }
    .apps button { position: relative; width: 48px; height: 40px; }
    .apps .run::after { content: ""; position: absolute; left: 4px; right: 4px; bottom: 0; height: 2px; background: #76b9ed; }
    .apps .now { background: #5f5e5d; } .apps .now::after { left: 0; right: 0; }
    .badge { position: absolute; width: 17px; height: 17px; border-radius: 50%; border: 1px solid #9a9a9a; background: #333;
      font-size: 12px; line-height: 15px; font-weight: 600; text-align: center; right: 3px; top: 19px; }
    .tray { margin-left: auto; display: flex; align-items: center; height: 40px; }
    .weather { display: flex; gap: 10px; font-size: 13px; line-height: 20px; margin-right: 18px; align-items: center; }
    .weather span { padding-top: 2px; }
    .icons { display: flex; align-items: center; gap: 8px; margin-right: 9px; }
    .clock { text-align: center; line-height: 18px; font-size: 11px; margin: 0 18px 0 13px; }
    .note { position: relative; width: 37px; height: 40px; border-right: 1px solid #6b6b6b; margin-right: 4px; justify-items: start; }
    .note .badge { right: 12px; }`; }
  html() {
    const app = (n, cls = '', extra = '') => `<button class="${cls}" aria-label="${n}"><ui-icon name="${n}" size="24"></ui-icon>${extra}</button>`;
    return `
    ${['windows', 'find', 'taskview'].map(n => `<button class="sys" aria-label="${n}"><ui-icon name="${n}"></ui-icon></button>`).join('')}
    <div class="apps">${app('store')}${app('edge')}${app('explorer', 'run')}${app('mail')}${app('instagram')}
      ${app('twitter', '', '<span class="badge">3</span>')}${app('vscode', 'run')}${app('chrome', 'run now')}${app('photos', 'run')}</div>
    <div class="tray">
      <div class="weather"><ui-icon name="sun" size="20"></ui-icon><span>29°C</span><span>Sunny</span></div>
      <div class="icons"><ui-icon name="trayup" size="12"></ui-icon><ui-icon name="record"></ui-icon><ui-icon name="meet"></ui-icon>
        <ui-icon name="wifi"></ui-icon><ui-icon name="volume"></ui-icon></div>
      <span>ENG</span>
      <div class="clock"><div>12:14</div><div>01/03/2023</div></div>
      <button class="note" aria-label="Notifications"><ui-icon name="notes"></ui-icon><span class="badge">9</span></button>
    </div>`;
  }
});
</script>
</body>
</html>
